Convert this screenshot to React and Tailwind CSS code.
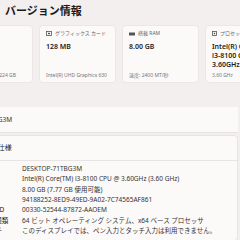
import React from "react"

const font = { fontFamily: '"Noto Sans", "Noto Sans CJK JP", sans-serif' }

// small glyph icons for the cards
function GpuIcon() {
  return (
    <svg width="6" height="5" viewBox="0 0 6 5" className="shrink-0">
      <rect x="0.5" y="0.5" width="5" height="4" fill="none" stroke="#555" strokeWidth="0.8" />
      <rect x="2" y="1.8" width="2" height="1.4" fill="#555" />
    </svg>
  )
}

function RamIcon() {
  return (
    <svg width="6" height="4" viewBox="0 0 6 4" className="shrink-0">
      <rect x="0" y="0.5" width="6" height="3" fill="#555" />
    </svg>
  )
}

function CpuIcon() {
  return (
    <svg width="5" height="5" viewBox="0 0 5 5" className="shrink-0">
      <rect x="0.5" y="0.5" width="4" height="4" fill="none" stroke="#555" strokeWidth="0.8" />
      <rect x="1.8" y="1.8" width="1.4" height="1.4" fill="#555" />
    </svg>
  )
}

function Card({ icon, label, value, foot }) {
  return (
    <div className="w-[77px] h-[58px] shrink-0 rounded-[4px] bg-[#fbfaf9] border border-[#ece7e6] px-[6px] pt-[5px] pb-[4px] flex flex-col">
      <div className="flex items-center gap-[3px] h-[5px] text-[5px] leading-[5px] text-[#666]">
        {icon}
        <span>{label}</span>
      </div>
      <div className="mt-[6px] text-[7px] leading-[9px] font-semibold text-[#1c1c1c] whitespace-pre-line">{value}</div>
      <div className="mt-auto text-[5px] leading-[6px] text-[#777] whitespace-nowrap">{foot}</div>
    </div>
  )
}

const specs = [
  ["デバイス名", "DESKTOP-71TBG3M"],
  ["プロセッサ", "Intel(R) Core(TM) i3-8100 CPU @ 3.60GHz   (3.60 GHz)"],
  ["実装 RAM", "8.00 GB (7.77 GB 使用可能)"],
  ["デバイス ID", "94188252-8ED9-49ED-9A02-7C74565AF861"],
  ["プロダクト ID", "00330-52544-87872-AAOEM"],
  ["システムの種類", "64 ビット オペレーティング システム、x64 ベース プロセッサ"],
  ["ペンとタッチ", "このディスプレイでは、ペン入力とタッチ入力は利用できません。"],
]

export default function App() {
  return (
    <div className="w-[240px] h-[240px] overflow-hidden bg-[#f4efef] relative" style={font}>
      <div className="ml-[-44px] w-[282px]">
        {/* Header */}
        <h1 className="pl-[49px] pt-[3px] h-[25px] text-[11px] leading-[15px] font-bold text-[#1a1a1a] whitespace-nowrap">
          バージョン情報
        </h1>

        {/* Spec cards */}
        <div className="flex gap-[6px] w-[400px]">
          <Card icon={<CpuIcon />} label="ストレージ" value="" foot="ストレージ合計 224 GB" />
          <Card icon={<GpuIcon />} label="グラフィックス カード" value="128 MB" foot="Intel(R) UHD Graphics 630" />
          <Card icon={<RamIcon />} label="搭載 RAM" value="8.00 GB" foot="速度: 2400 MT/秒" />
          <Card
            icon={<CpuIcon />}
            label="プロセッサ"
            value={"Intel(R) Core(TM)\ni3-8100 CPU @\n3.60GHz"}
            foot="3.60 GHz"
          />
        </div>

        {/* Device name row */}
        <div className="mt-[24px] h-[26px] bg-[#fbfaf9] border-b border-[#e8e4e3] flex items-center">
          <span className="ml-[-4px] text-[6.5px] text-[#333] whitespace-nowrap">DESKTOP-71TBG3M</span>
        </div>

        {/* Specs panel */}
        <div className="mt-[2px] w-[282px] rounded-[4px] bg-[#fbfaf9] border border-[#e8e4e3]">
          <div className="h-[25px] flex items-center pl-[6px] border-b border-[#e8e4e3]">
            <span className="text-[7px] text-[#222]">デバイスの仕様</span>
          </div>
          <div className="pt-[3px] pb-[4px]">
            {specs.map(([k, v]) => (
              <div key={k} className="flex h-[10.3px] items-center text-[6.5px] leading-[10px] whitespace-nowrap">
                <span className="w-[65px] pl-[6px] shrink-0 text-[#222]">{k}</span>
                <span className="text-[#333]">{v}</span>
              </div>
            ))}
          </div>
        </div>
      </div>
    </div>
  )
}
